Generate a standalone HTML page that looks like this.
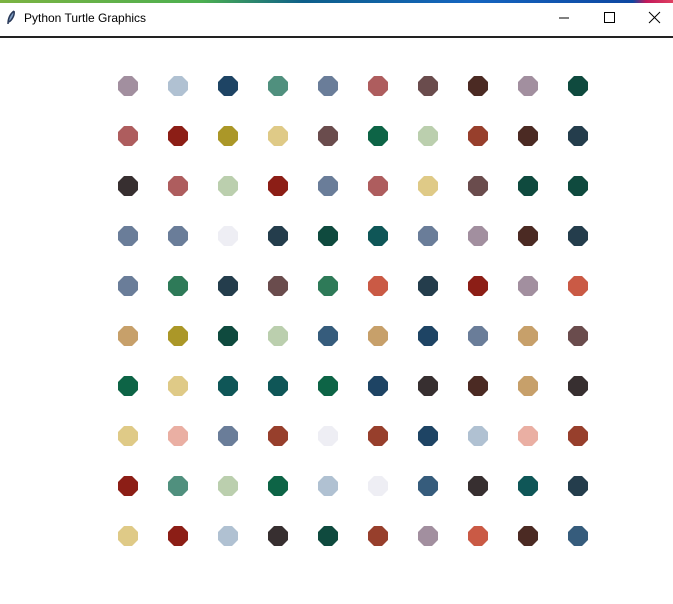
<!DOCTYPE html>
<html><head><style>
body{margin:0;width:673px;height:604px;background:#fff;position:relative;overflow:hidden;font-family:"Liberation Sans",sans-serif}
.top{position:absolute;left:0;top:0;width:673px;height:3px;background:linear-gradient(90deg,#7cb342 0%,#4caf50 30%,#0d5f8a 45%,#1565c0 70%,#0d47a1 94%,#c2185b 96%,#e04060 100%)}
.tb{position:absolute;left:0;top:3px;width:673px;height:33px;background:#fff}
.line{position:absolute;left:0;top:36px;width:673px;height:2px;background:#222}
.title{position:absolute;left:24px;top:11px;font-size:12px;color:#000}
.d{position:absolute;width:20px;height:20px;clip-path:polygon(30% 0,70% 0,100% 30%,100% 70%,70% 100%,30% 100%,0 70%,0 30%)}
</style></head><body>
<div class="top"></div><div class="tb"></div><div class="line"></div>
<svg style="position:absolute;left:6px;top:10px" width="10" height="16"><path d="M8 1 C4 4 2 9 2 14 M8 1 C9 5 6 10 3 12" stroke="#2a3a5a" stroke-width="1.5" fill="#7a9ac0"/></svg>
<div class="title">Python Turtle Graphics</div>
<svg style="position:absolute;left:557px;top:10px" width="110" height="16">
<line x1="2" y1="8" x2="12" y2="8" stroke="#000"/>
<rect x="47.5" y="2.5" width="10" height="10" fill="none" stroke="#000"/>
<path d="M92 2 L103 13 M103 2 L92 13" stroke="#000"/>
</svg>
<div id="g"></div>
<script>
var c={A:"#a28f9f",B:"#b0c1d2",C:"#1e4464",D:"#50907e",E:"#6a7d99",F:"#ae5d5e",G:"#6a4c4d",H:"#4b2a23",I:"#0f4a3e",J:"#8c1e16",K:"#ab9728",L:"#dfca87",M:"#0d6446",N:"#bbcfae",O:"#973f2c",P:"#243d4c",Q:"#372f30",S:"#eeeef4",T:"#0f5657",U:"#ca5a45",V:"#2e7a58",W:"#c7a06a",X:"#365c7c",Y:"#eaafa3"};
var rows=["ABCDEFGHAI","FJKLGMNOHP","QFNJEFLGII","EESPITEAHP","EVPGVUPJAU","WKINXWCEWG","MLTTMCQHWQ","LYEOSOCBYO","JDNMBSXQTP","LJBQIOAUHX"];
var h="";for(var r=0;r<10;r++)for(var k=0;k<10;k++)h+='<div class="d" style="left:'+(118+k*50)+'px;top:'+(76+r*50)+'px;background:'+c[rows[r][k]]+'"></div>';
document.getElementById("g").innerHTML=h;
</script>
</body></html>
